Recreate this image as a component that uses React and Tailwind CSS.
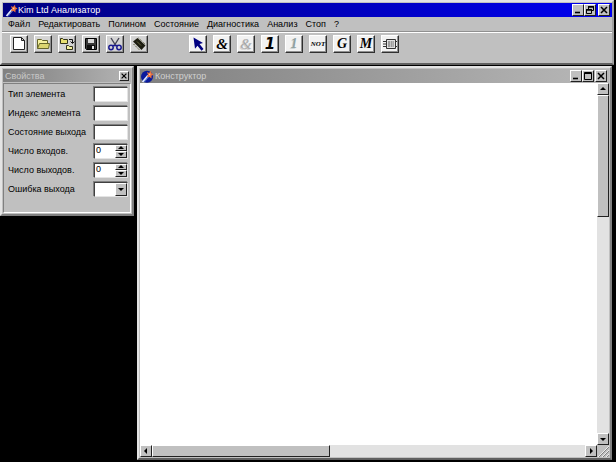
import React, { useState } from 'react';
import clsx from 'clsx';

const MENU = ['Файл', 'Редактировать', 'Полином', 'Состояние', 'Диагностика', 'Анализ', 'Стоп', '?'];

const RAISED = 'bg-[#c0c0c0] border border-t-white border-l-white border-r-[#202020] border-b-[#202020]';
const SUNKEN = 'bg-white border border-t-[#404040] border-l-[#404040] border-r-[#e4e4e4] border-b-[#e4e4e4] shadow-[-1px_-1px_0_#808080]';

function AppIcon({ disc }) {
  return (
    <svg viewBox="0 0 13 13" className="w-[13px] h-[13px] shrink-0" aria-hidden="true">
      {disc && <circle cx="6" cy="6.8" r="6" fill="#0a1a9c" />}
      <path d="M1.5 12 L7 5.5" stroke="#dfe8ff" strokeWidth="1.8" />
      <path d="M3 12.5 L8 6.5" stroke="#5f87d8" strokeWidth="0.8" />
      <path d="M6 2 L8 3 L10 0.8 L10.3 3 L12.5 4.5 L10.5 5.8 L10.5 8.5 L8.5 7 L6 7.2 L7 5 Z" fill="#e8703c" />
      <path d="M7.5 4 L9.5 3.5 L9 5.8 Z" fill="#ffd9a8" />
    </svg>
  );
}

const GLYPHS = {
  minimize: <path d="M2 7.5h5" stroke="#000" strokeWidth="1.6" />,
  restore: (
    <g fill="none" stroke="#000">
      <path d="M3.5 4V1.5h5v4H7" />
      <path d="M3 2h6M1 5h6" strokeWidth="1.5" />
      <path d="M1.5 4.5h5v4h-5z" />
    </g>
  ),
  maximize: <path d="M1.5 1.5h7v7h-7zM1 2.5h8" fill="none" stroke="#000" />,
  close: <path d="M2 2l6 6M8 2l-6 6" stroke="#000" strokeWidth="1.5" />,
};

function CaptionButton({ glyph, label, small }) {
  return (
    <button type="button" aria-label={label} className={clsx(RAISED, 'flex items-center justify-center', small ? 'w-[10px] h-[10px]' : 'w-[12px] h-[12px]')}>
      <svg viewBox="0 0 10 10" className={small ? 'w-[8px] h-[8px]' : 'w-[10px] h-[10px]'}>{GLYPHS[glyph]}</svg>
    </button>
  );
}

const ARROWS = {
  up: 'M1 5h6L4 2z',
  down: 'M1 3h6L4 6z',
  left: 'M5 1v6L2 4z',
  right: 'M3 1v6l3-3z',
};

function Arrow({ dir }) {
  return (
    <svg viewBox="0 0 8 8" className="w-[8px] h-[8px] shrink-0" aria-hidden="true"><path d={ARROWS[dir]} fill="#000" /></svg>
  );
}

function ScrollButton({ dir, label }) {
  return (
    <button type="button" aria-label={label} className={clsx(RAISED, 'w-[12px] h-[12px] shrink-0 flex items-center justify-center')}>
      <Arrow dir={dir} />
    </button>
  );
}

/* ---- toolbar drawings, all on a 16x16 grid ---- */
const FILE_TOOLS = [
  {
    label: 'Новый',
    icon: <path d="M2.5 1.5h8l3 3v9h-11zM10.5 1.5v3h3" fill="#fff" stroke="#222" />,
  },
  {
    label: 'Открыть',
    icon: (
      <g stroke="#66662a">
        <path d="M2.5 12.5v-9h4l1 1h5v3" fill="#f6f2a0" />
        <path d="M2.5 12.5l2-5h10l-1 5z" fill="#dcd670" />
      </g>
    ),
  },
  {
    label: 'Открыть проект',
    icon: (
      <g>
        <path d="M1.5 7.5v-5h2l1 1h4v4z" fill="#e8e070" stroke="#33331a" />
        <path d="M7.5 13.5v-4h2l1 1h3v3z" fill="#f6f2a0" stroke="#33331a" />
        <path d="M10 3.5h3.5V7M11.5 5.5l2 2 2-2" fill="none" stroke="#111" />
      </g>
    ),
  },
  {
    label: 'Сохранить',
    icon: (
      <g>
        <path d="M2.5 2.5h11v11h-10l-1-1z" fill="#3a3a3a" stroke="#000" />
        <path d="M5 3h6v4H5z" fill="#d8d8d8" />
        <path d="M4 9h8v4H4z" fill="#111" />
        <path d="M9 10h2v3H9z" fill="#e8e8e8" />
      </g>
    ),
  },
  {
    label: 'Вырезать',
    icon: (
      <g fill="none">
        <path d="M4 2l5 8M12 2l-5 8" stroke="#445" strokeWidth="1.4" />
        <circle cx="4" cy="11.5" r="2.2" stroke="#1a1a90" strokeWidth="1.5" />
        <circle cx="12" cy="11.5" r="2.2" stroke="#1a1a90" strokeWidth="1.5" />
        <path d="M5.5 9.5h5" stroke="#1a1a90" strokeWidth="1.5" />
      </g>
    ),
  },
  {
    label: 'Микросхема',
    icon: (
      <g>
        <path d="M2 5.5L6.5 2l8 7.5L10.5 14z" fill="#1c1c10" />
        <path d="M2.5 8l6 6" stroke="#55552c" strokeDasharray="1.5 1" />
        <path d="M7.5 2L14.5 8.5" stroke="#55552c" strokeDasharray="1 1" />
        <path d="M6 5.5l4 4" stroke="#77774a" strokeWidth="0.8" />
      </g>
    ),
  },
];

const ELEMENT_TOOLS = [
  {
    label: 'Указатель',
    icon: <path d="M3.5 1.5l9.5 5.5-3.5 1 4 5-2 1.7-4-5-2.5 3z" fill="#000080" />,
  },
  { label: 'И', text: '&', look: 'font-[Liberation_Serif,serif] font-bold italic text-[15px] text-black' },
  { label: 'И-НЕ', text: '&', look: 'font-[Liberation_Serif,serif] italic text-[15px] text-[#a8a8a8] text-shadow-[-1px_1px_0_#d0d0d0]' },
  { label: 'ИЛИ', text: '1', look: 'font-[DejaVu_Sans,sans-serif] font-black italic text-[15px] text-black' },
  { label: 'ИЛИ-НЕ', text: '1', look: 'font-[Liberation_Serif,serif] font-bold italic text-[14px] text-[#90a0a0] text-shadow-[-1px_1px_0_#ccd4d4]' },
  { label: 'НЕ', text: 'NOT', look: 'font-[Liberation_Serif,serif] font-bold italic text-[7px] text-black' },
  { label: 'Генератор', text: 'G', look: 'font-[Liberation_Serif,serif] font-bold italic text-[14px] text-black' },
  { label: 'Модуль', text: 'M', look: 'font-[Liberation_Serif,serif] font-bold italic text-[14px] text-black' },
  {
    label: 'Схема',
    icon: (
      <g fill="none" stroke="#333">
        <path d="M4.5 3.5h9v9h-9z" fill="#e0e0e0" />
        <path d="M1 5.5h3M1 8h3M1 10.5h3M14 5.5h1M14 10.5h1" />
        <path d="M6 6h6M6 8h6M6 10h6" strokeDasharray="2 .6" strokeWidth="0.8" />
      </g>
    ),
  },
];

function ToolButton({ tool, white }) {
  return (
    <button
      type="button"
      aria-label={tool.label}
      className={clsx(
        'w-[18px] h-[18px] shrink-0 flex items-center justify-center overflow-hidden border border-t-white border-l-white border-r-[#303030] border-b-[#303030] shadow-[inset_-1px_-1px_0_#909090]',
        white ? 'bg-[#f2f2f2]' : 'bg-[#d4d4d4]'
      )}
    >
      {tool.icon
        ? <svg viewBox="0 0 16 16" className="w-[16px] h-[16px] shrink-0">{tool.icon}</svg>
        : <span className={clsx('leading-none', tool.look)}>{tool.text}</span>}
    </button>
  );
}

function Field({ id, label, children }) {
  return (
    <div className="flex items-center justify-between h-[16px]">
      <label htmlFor={id} className="whitespace-nowrap">{label}</label>
      {children}
    </div>
  );
}

function TextField({ id, label }) {
  return (
    <Field id={id} label={label}>
      <input id={id} type="text" className={clsx(SUNKEN, 'w-[34px] h-[15px] px-px outline-none')} />
    </Field>
  );
}

function SpinField({ id, label }) {
  const [value, setValue] = useState(0);
  return (
    <Field id={id} label={label}>
      <div className={clsx(SUNKEN, 'w-[34px] h-[15px] flex')}>
        <input
          id={id}
          type="text"
          inputMode="numeric"
          value={value}
          onChange={(e) => setValue(Number(e.target.value) || 0)}
          className="min-w-0 flex-1 px-px pb-[2px] leading-none outline-none"
        />
        <div className="w-[12px] flex flex-col">
          <button type="button" aria-label="Больше" onClick={() => setValue(value + 1)} className={clsx(RAISED, 'flex-1 min-h-0 flex items-center justify-center overflow-hidden')}><Arrow dir="up" /></button>
          <button type="button" aria-label="Меньше" onClick={() => setValue(Math.max(0, value - 1))} className={clsx(RAISED, 'flex-1 min-h-0 flex items-center justify-center overflow-hidden')}><Arrow dir="down" /></button>
        </div>
      </div>
    </Field>
  );
}

export default function App() {
  return (
    <div className="h-screen bg-black flex flex-col gap-px pb-[2px] overflow-hidden font-[Liberation_Sans,Arial,sans-serif] text-[9px] leading-[12px] text-black">
      <header className="mr-[2px] bg-[#c0c0c0] border-2 border-t-[#e4e4e4] border-l-[#e4e4e4] border-r-[#a0a0a0] border-b-[#606060]">
        <div className="ml-px mt-px h-[14px] pl-[2px] pr-[2px] flex items-center bg-linear-to-r from-[#000080] to-[#0000f0] text-white">
          <AppIcon />
          <h1 className="flex-1 whitespace-nowrap">Kim Ltd Анализатор</h1>
          <CaptionButton glyph="minimize" label="Свернуть" />
          <CaptionButton glyph="restore" label="Восстановить" />
          <div className="w-[2px]" />
          <CaptionButton glyph="close" label="Закрыть" />
        </div>
        <nav className="h-[15px] pl-[6px] flex items-center gap-[8px] border-b border-[#909090]">
          {MENU.map((item) => (
            <button key={item} type="button" className="whitespace-nowrap">{item}</button>
          ))}
        </nav>
        <div className="h-[31px] pl-[8px] pt-[2px] flex items-start gap-[41px] border-t border-white">
          <div className="flex gap-[6px]">
            {FILE_TOOLS.map((tool) => <ToolButton key={tool.label} tool={tool} />)}
          </div>
          <div className="flex gap-[6px]">
            {ELEMENT_TOOLS.map((tool) => <ToolButton key={tool.label} tool={tool} white />)}
          </div>
        </div>
      </header>

      <main className="flex-1 min-h-0 flex items-start gap-[3px] mr-[4px]">
        <aside className="w-[134px] shrink-0 bg-[#c0c0c0] border-2 border-t-[#e4e4e4] border-l-[#e4e4e4] border-r-[#808080] border-b-[#808080] p-px">
          <div className="h-[13px] px-[2px] flex items-center bg-linear-to-r from-[#808080] to-[#b4b4b4] text-[#c8c8c8]">
            <h2 className="flex-1">Свойства</h2>
            <CaptionButton glyph="close" label="Закрыть свойства" small />
          </div>
          <form className="mt-px border border-t-[#808080] border-l-[#808080] border-r-white border-b-white pl-[4px] pr-[2px] pt-[2px] pb-[15px] flex flex-col gap-[3px]">
            <TextField id="type" label="Тип элемента" />
            <TextField id="index" label="Индекс элемента" />
            <TextField id="state" label="Состояние выхода" />
            <SpinField id="inputs" label="Число входов." />
            <SpinField id="outputs" label="Число выходов." />
            <Field id="error" label="Ошибка выхода">
              <div className={clsx(SUNKEN, 'relative w-[34px] h-[15px]')}>
                <select id="error" className="w-full h-full appearance-none outline-none">
                  <option value=""></option>
                </select>
                <span className={clsx(RAISED, 'absolute right-0 top-0 w-[12px] h-[13px] flex items-center justify-center pointer-events-none')}><Arrow dir="down" /></span>
              </div>
            </Field>
          </form>
        </aside>

        <section className="flex-1 min-w-0 self-stretch flex flex-col bg-[#c0c0c0] border-2 border-t-[#e4e4e4] border-l-[#e4e4e4] border-r-[#808080] border-b-[#606060] p-px">
          <div className="h-[14px] shrink-0 pl-px pr-[2px] flex items-center gap-px bg-linear-to-r from-[#808080] to-[#b8b8b8] text-[#d0d0d0]">
            <AppIcon disc />
            <h2 className="flex-1">Конструктор</h2>
            <div className="flex">
              <CaptionButton glyph="minimize" label="Свернуть окно" />
              <CaptionButton glyph="maximize" label="Развернуть окно" />
            </div>
            <CaptionButton glyph="close" label="Закрыть окно" />
          </div>
          <div className="flex-1 min-h-0 flex">
            <div className="flex-1 bg-white" />
            <div className="w-[12px] flex flex-col bg-[#e2e2e2]">
              <ScrollButton dir="up" label="Вверх" />
              <div className="flex-1 min-h-0"><div className={clsx(RAISED, 'h-[36%]')} /></div>
              <ScrollButton dir="down" label="Вниз" />
            </div>
          </div>
          <div className="h-[12px] shrink-0 flex">
            <div className="flex-1 flex bg-[#e2e2e2]">
              <ScrollButton dir="left" label="Влево" />
              <div className="flex-1 min-w-0"><div className={clsx(RAISED, 'w-[41%] h-full')} /></div>
              <ScrollButton dir="right" label="Вправо" />
            </div>
            <svg viewBox="0 0 12 12" className="w-[12px] h-[12px]" aria-hidden="true">
              <path d="M2 12L12 2M6 12l6-6M10 12l2-2" stroke="#808080" />
              <path d="M1 12L12 1M5 12l7-7M9 12l3-3" stroke="#fff" strokeWidth="0.7" />
            </svg>
          </div>
        </section>
      </main>
    </div>
  );
}
